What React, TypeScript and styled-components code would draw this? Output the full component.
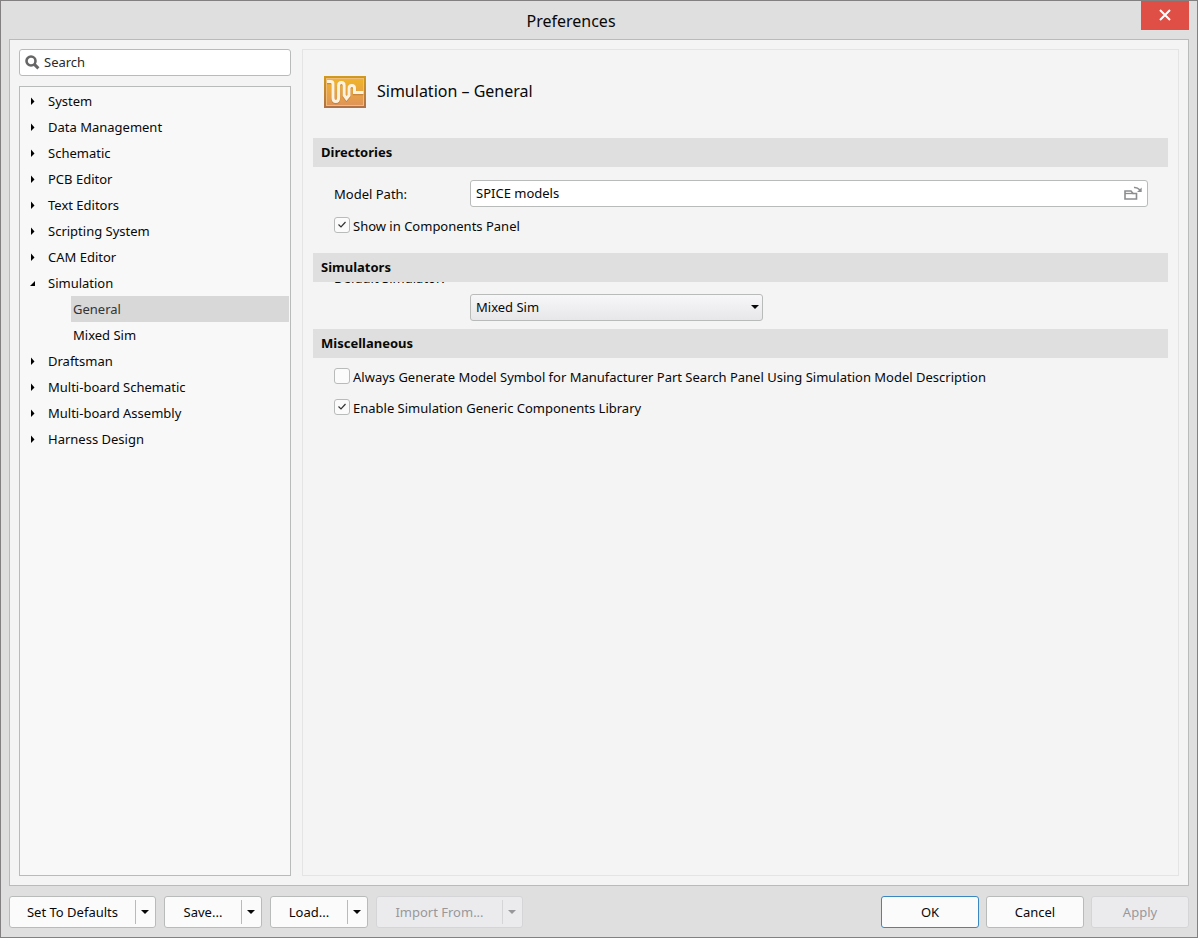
import React, { useState } from "react";
import styled, { createGlobalStyle, css } from "styled-components";

const font = `"Noto Sans", "Segoe UI", sans-serif`;

const GlobalStyle = createGlobalStyle`
  *, *::before, *::after { box-sizing: border-box; }
  body { margin: 0; background: #dfdfdf; }
  body, button, input, select { font-family: ${font}; font-size: 13px; line-height: 20px; color: #080808; }
  button { cursor: default; }
`;

const Window = styled.div`
  display: flex;
  flex-direction: column;
  min-height: 100vh;
  border: 1px solid #828080;
  background: #dfdfdf;
`;

const TitleBar = styled.header`
  display: flex;
  height: 38px;
  padding-right: 8px;
`;

const WindowTitle = styled.div`
  flex: 1;
  text-align: center;
  font-size: 16px;
  line-height: 40px;
`;

const CloseButton = styled.button`
  display: grid;
  place-items: center;
  width: 48px;
  height: 29px;
  padding: 0 1px 2px 0;
  border: 0;
  background: #df4f45;
`;

const Panel = styled.main`
  flex: 1;
  display: flex;
  gap: 11px;
  margin: 0 8px;
  padding: 9px;
  border: 1px solid #b9bbba;
  background: #f4f4f4;
`;

const Sidebar = styled.aside`
  display: flex;
  flex-direction: column;
  gap: 10px;
  flex: 0 0 272px;
`;

const SearchBox = styled.label`
  display: flex;
  align-items: center;
  gap: 4px;
  height: 27px;
  padding: 0 5px 1px;
  border: 1px solid #b9bbba;
  border-radius: 3px;
  background: #fff;
`;

const SearchInput = styled.input`
  flex: 1;
  min-width: 0;
  padding: 0;
  border: 0;
  outline: 0;
  background: transparent;
  &::placeholder { color: #2a2a2a; opacity: 1; }
`;

const Tree = styled.nav`
  flex: 1;
  padding: 1px;
  border: 1px solid #b9bbba;
  background: #f8f8f8;
`;

const List = styled.ul<{ $nested?: boolean }>`
  margin: 0;
  padding: 0 0 0 ${(p) => (p.$nested ? 50 : 0)}px;
  list-style: none;
`;

const TreeButton = styled.button<{ $leaf?: boolean; $selected?: boolean }>`
  display: flex;
  align-items: center;
  gap: 11px;
  width: 100%;
  height: 26px;
  padding: 0 0 0 ${(p) => (p.$leaf ? 2 : 8)}px;
  border: 0;
  text-align: left;
  background: ${(p) => (p.$selected ? "#d8d8d8" : "transparent")};
  color: ${(p) => (p.$selected ? "#333" : "#080808")};
`;

const Content = styled.section`
  flex: 1;
  min-width: 0;
  padding: 26px 10px 10px;
  border: 1px solid #e4e4e4;
`;

const PageHeader = styled.div`
  display: flex;
  gap: 11px;
  padding-left: 11px;
  margin-bottom: 30px;
`;

const PageTitle = styled.h1`
  margin: 0;
  font-size: 16px;
  font-weight: 400;
  line-height: 30px;
`;

const SectionHeading = styled.h2`
  position: relative;
  z-index: 1;
  margin: 0;
  padding: 0 8px;
  font-size: 13px;
  line-height: 29px;
  background: #dfdfdf;
`;

const SectionBody = styled.div`
  display: flex;
  flex-direction: column;
  gap: 10px;
  padding: 13px 20px 20px 21px;
`;

const SimulatorBody = styled(SectionBody)`
  padding-top: 12px;
  padding-bottom: 8px;
`;

const OptionsBody = styled(SectionBody)`
  gap: 15px;
  padding-top: 10px;
`;

const Field = styled.div`
  display: grid;
  grid-template-columns: 136px 1fr;
  align-items: center;
`;

const FieldLabel = styled.label<{ $tucked?: boolean }>`
  ${(p) =>
    p.$tucked &&
    css`
      align-self: start;
      margin-top: -26px;
    `}
`;

const controlFrame = css`
  height: 27px;
  border: 1px solid #b9bbba;
  border-radius: 3px;
`;

const PathBox = styled.div`
  ${controlFrame}
  display: flex;
  align-items: center;
  padding: 0 4px 1px 5px;
  background: #fff;
`;

const PathInput = styled(SearchInput)``;

const BrowseButton = styled.button`
  display: flex;
  padding: 0;
  border: 0;
  background: transparent;
`;

const SelectWrap = styled.div`
  position: relative;
  max-width: 293px;
  svg { position: absolute; right: 4px; top: 11px; pointer-events: none; }
`;

const Select = styled.select`
  ${controlFrame}
  display: block;
  appearance: none;
  width: 100%;
  padding: 0 20px 1px 5px;
  background: linear-gradient(#f7f7f9, #e7e7ea);
`;

const CheckLabel = styled.label`
  display: flex;
  align-items: flex-start;
  gap: 3px;
  height: 16px;
  line-height: 18px;
  white-space: nowrap;
`;

const CheckMark = styled.span`
  display: grid;
  width: 16px;
  height: 16px;
  place-items: center;
  > * { grid-area: 1 / 1; }
  input:not(:checked) + svg { display: none; }
`;

const CheckInput = styled.input`
  appearance: none;
  width: 16px;
  height: 16px;
  margin: 0;
  border: 1px solid #b9bbba;
  border-radius: 3px;
  background: #fbfbfb;
`;

const Footer = styled.footer`
  display: flex;
  justify-content: space-between;
  padding: 10px 8px 9px;
`;

const ButtonGroup = styled.div<{ $gap: number }>`
  display: flex;
  gap: ${(p) => p.$gap}px;
`;

const buttonFrame = css<{ $primary?: boolean; $off?: boolean }>`
  height: 32px;
  border: 1px solid ${(p) => (p.$primary ? "#3b87c0" : p.$off ? "#d5d5d8" : "#b9bbba")};
  border-radius: 3px;
  background: ${(p) => (p.$off ? "#ebebed" : "#fbfbfb")};
  color: ${(p) => (p.$off ? "#98989c" : "#080808")};
`;

const PushButton = styled.button<{ $primary?: boolean; $off?: boolean }>`
  ${buttonFrame}
  width: 98px;
  padding: 0;
`;

const SplitFrame = styled.div<{ $wide?: boolean; $off?: boolean }>`
  ${buttonFrame}
  display: flex;
  align-items: center;
  width: ${(p) => (p.$wide ? 147 : 98)}px;
`;

const SplitMain = styled.button`
  flex: 1;
  height: 30px;
  padding: 0;
  border: 0;
  background: transparent;
  color: inherit;
`;

const SplitArrow = styled.button<{ $off?: boolean }>`
  display: grid;
  place-items: center;
  width: 20px;
  height: 24px;
  padding: 0 2px 0 0;
  border: 0;
  border-left: 1px solid ${(p) => (p.$off ? "#d5d5d8" : "#b9bbba")};
  background: transparent;
  color: inherit;
`;

const DownArrow = () => (
  <svg width="8" height="4" viewBox="0 0 8 4" aria-hidden="true">
    <path d="M0 0H8L4 4Z" fill="currentColor" />
  </svg>
);

const Twisty = ({ open }: { open?: boolean }) => (
  <svg width="8" height="8" viewBox="0 0 8 8" aria-hidden="true">
    <path d={open ? "M6 2V7H1Z" : "M2 0.500L5.500 4.500L2 8Z"} fill="#000" />
  </svg>
);

const SearchIcon = () => (
  <svg width="15" height="15" viewBox="0 0 15 15" fill="none" stroke="#666" aria-hidden="true">
    <circle cx="6" cy="6" r="4.500" strokeWidth="2.600" />
    <path d="M9.400 9.400L13.400 13.400" strokeWidth="3" />
  </svg>
);

const BrowseIcon = () => (
  <svg width="20" height="16" viewBox="0 0 20 16" fill="none" stroke="#8b8d8f" aria-hidden="true">
    <path d="M2 14V6H8L10 8.500H13.500V14Z" strokeWidth="1.600" />
    <path d="M2 8.500H10.500" strokeWidth="1.300" />
    <path d="M11 2.500C14 2 15.500 3.500 17 5" strokeWidth="1.600" />
    <path d="M18.700 2.500V7H14Z" fill="#8b8d8f" stroke="none" />
  </svg>
);

const WAVE =
  "M3 5.500H6.500Q9 5.500 9 8V22Q9 25.500 11.800 25.500Q14.600 25.500 14.600 22V9.500Q14.600 6.500 17.400 6.500Q20.200 6.500 20.200 9.500V19.500L22.500 22.500L25 19.500V12.500Q25 9.500 27.800 9.500Q30.500 9.500 30.500 12V16.500H39.500";

const SimulationIcon = () => (
  <svg width="42" height="32" viewBox="0 0 42 32" fill="none" aria-hidden="true">
    <defs>
      <linearGradient id="sim-fill" x1="0" y1="0" x2="0" y2="1">
        <stop offset="0" stopColor="#f0b428" />
        <stop offset="1" stopColor="#e0945a" />
      </linearGradient>
      <linearGradient id="sim-edge" x1="0" y1="0" x2="0" y2="1">
        <stop offset="0" stopColor="#cf9a1e" />
        <stop offset="1" stopColor="#b07048" />
      </linearGradient>
    </defs>
    <rect width="42" height="32" fill="url(#sim-edge)" />
    <rect x="2.500" y="2.500" width="37" height="27" fill="url(#sim-fill)" stroke="#f0bd78" />
    <path d={WAVE} stroke="#a8682c" strokeOpacity="0.450" strokeWidth="3.400" transform="translate(0 1)" />
    <path d={WAVE} stroke="#fff3e0" strokeWidth="3" />
  </svg>
);

const tree: { name: string; children?: string[] }[] = [
  { name: "System" },
  { name: "Data Management" },
  { name: "Schematic" },
  { name: "PCB Editor" },
  { name: "Text Editors" },
  { name: "Scripting System" },
  { name: "CAM Editor" },
  { name: "Simulation", children: ["General", "Mixed Sim"] },
  { name: "Draftsman" },
  { name: "Multi-board Schematic" },
  { name: "Multi-board Assembly" },
  { name: "Harness Design" },
];

function Check({ label, checked }: { label: string; checked?: boolean }) {
  return (
    <CheckLabel>
      <CheckMark>
        <CheckInput type="checkbox" defaultChecked={checked} />
        <svg width="10" height="8" viewBox="0 0 10 8" fill="none" stroke="#333" strokeWidth="1.200" aria-hidden="true">
          <path d="M1.500 3.500L4 6L8.500 1" />
        </svg>
      </CheckMark>
      {label}
    </CheckLabel>
  );
}

function SplitButton({ label, wide, disabled }: { label: string; wide?: boolean; disabled?: boolean }) {
  return (
    <SplitFrame $wide={wide} $off={disabled}>
      <SplitMain disabled={disabled}>{label}</SplitMain>
      <SplitArrow $off={disabled} disabled={disabled} aria-label={`${label} options`}>
        <DownArrow />
      </SplitArrow>
    </SplitFrame>
  );
}

export default function App() {
  const [selected, setSelected] = useState("General");
  return (
    <>
      <GlobalStyle />
      <Window>
        <TitleBar>
          <WindowTitle>Preferences</WindowTitle>
          <CloseButton aria-label="Close">
            <svg width="12" height="12" viewBox="0 0 12 12" stroke="#fff" strokeWidth="2" aria-hidden="true">
              <path d="M1 1L11 11M11 1L1 11" />
            </svg>
          </CloseButton>
        </TitleBar>
        <Panel>
          <Sidebar>
            <SearchBox>
              <SearchIcon />
              <SearchInput placeholder="Search" aria-label="Search" />
            </SearchBox>
            <Tree>
              <List>
                {tree.map((node) => (
                  <li key={node.name}>
                    <TreeButton>
                      <Twisty open={!!node.children} />
                      {node.name}
                    </TreeButton>
                    {node.children && (
                      <List $nested>
                        {node.children.map((child) => (
                          <li key={child}>
                            <TreeButton $leaf $selected={child === selected} onClick={() => setSelected(child)}>
                              {child}
                            </TreeButton>
                          </li>
                        ))}
                      </List>
                    )}
                  </li>
                ))}
              </List>
            </Tree>
          </Sidebar>
          <Content>
            <PageHeader>
              <SimulationIcon />
              <PageTitle>Simulation – General</PageTitle>
            </PageHeader>
            <SectionHeading>Directories</SectionHeading>
            <SectionBody>
              <Field>
                <FieldLabel htmlFor="model-path">Model Path:</FieldLabel>
                <PathBox>
                  <PathInput id="model-path" defaultValue="SPICE models" />
                  <BrowseButton aria-label="Browse">
                    <BrowseIcon />
                  </BrowseButton>
                </PathBox>
              </Field>
              <Check label="Show in Components Panel" checked />
            </SectionBody>
            <SectionHeading>Simulators</SectionHeading>
            <SimulatorBody>
              <Field>
                <FieldLabel htmlFor="simulator" $tucked>Default Simulator:</FieldLabel>
                <SelectWrap>
                  <Select id="simulator">
                    <option>Mixed Sim</option>
                  </Select>
                  <DownArrow />
                </SelectWrap>
              </Field>
            </SimulatorBody>
            <SectionHeading>Miscellaneous</SectionHeading>
            <OptionsBody>
              <Check label="Always Generate Model Symbol for Manufacturer Part Search Panel Using Simulation Model Description" />
              <Check label="Enable Simulation Generic Components Library" checked />
            </OptionsBody>
          </Content>
        </Panel>
        <Footer>
          <ButtonGroup $gap={8}>
            <SplitButton label="Set To Defaults" wide />
            <SplitButton label="Save..." />
            <SplitButton label="Load..." />
            <SplitButton label="Import From..." wide disabled />
          </ButtonGroup>
          <ButtonGroup $gap={7}>
            <PushButton $primary>OK</PushButton>
            <PushButton>Cancel</PushButton>
            <PushButton $off disabled>Apply</PushButton>
          </ButtonGroup>
        </Footer>
      </Window>
    </>
  );
}
